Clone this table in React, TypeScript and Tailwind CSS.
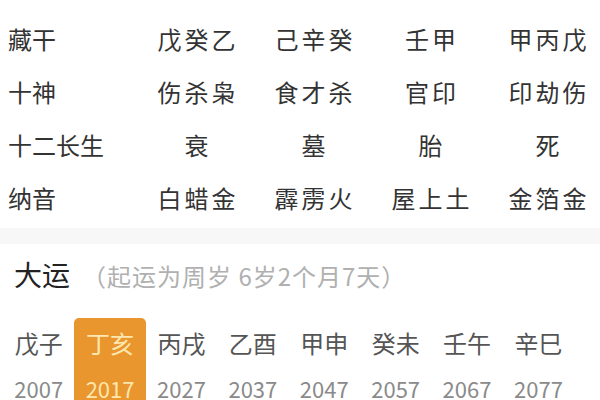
const cjk = { fontFamily: '"Noto Sans CJK SC", "Noto Sans", sans-serif' };

const rows: { label: string; cells: string[] }[] = [
  { label: '藏干', cells: ['戊癸乙', '己辛癸', '壬甲', '甲丙戊'] },
  { label: '十神', cells: ['伤杀枭', '食才杀', '官印', '印劫伤'] },
  { label: '十二长生', cells: ['衰', '墓', '胎', '死'] },
  { label: '纳音', cells: ['白蜡金', '霹雳火', '屋上土', '金箔金'] },
];

const dayun = [
  { gz: '戊子', year: 2007 },
  { gz: '丁亥', year: 2017 },
  { gz: '丙戌', year: 2027 },
  { gz: '乙酉', year: 2037 },
  { gz: '甲申', year: 2047 },
  { gz: '癸未', year: 2057 },
  { gz: '壬午', year: 2067 },
  { gz: '辛巳', year: 2077 },
];

export default function App() {
  const current = 1;

  return (
    <div className="w-[600px] h-[400px] overflow-hidden bg-white" style={cjk}>
      {/* Pillar details table */}
      <div className="pt-[12px] pb-[4px]">
        {rows.map((row) => (
          <div key={row.label} className="grid grid-cols-[138px_117px_117px_117px_117px] h-[53px] items-center text-[24px] leading-none text-[#333]">
            <div className="pl-[8px]">{row.label}</div>
            {row.cells.map((c, i) => (
              <div key={i} className="text-center tracking-[3px] pl-[3px]">{c}</div>
            ))}
          </div>
        ))}
      </div>

      {/* section divider */}
      <div className="h-[16px] bg-[#f7f7f7]" />

      {/* 大运 */}
      <div className="flex items-baseline px-[14px] pt-[16px]">
        <span className="text-[28px] leading-none text-[#222]">大运</span>
        <span className="ml-[12px] text-[24px] tracking-[1px] leading-none text-[#b0b0b0]">（起运为周岁 6岁2个月7天）</span>
      </div>

      <div className="flex pl-[3px] mt-[30px]">
        {dayun.map((d, i) => (
          <div
            key={d.year}
            className={`w-[71.4px] flex flex-col items-center pt-[13px] pb-[12px] ${i === current ? 'bg-[#e9962e] rounded-[5px] text-[#fde7ae]' : ''}`}
          >
            <span className={`text-[24px] leading-none ${i === current ? '' : 'text-[#555]'}`}>{d.gz}</span>
            <span className={`mt-[22px] text-[22px] leading-none ${i === current ? '' : 'text-[#8a8a8a]'}`}>{d.year}</span>
          </div>
        ))}
      </div>
    </div>
  );
}
